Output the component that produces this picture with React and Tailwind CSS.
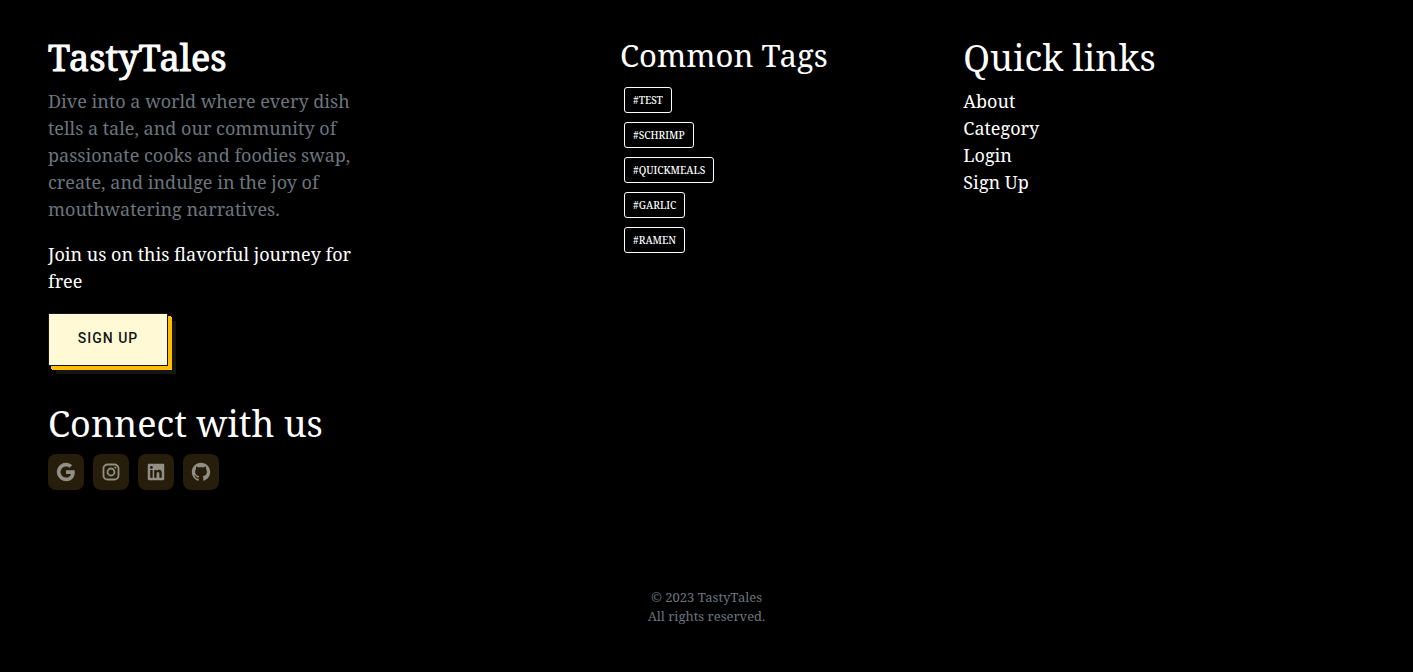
import { RiGoogleFill, RiLinkedinBoxFill, RiGithubFill } from "react-icons/ri";

function InstagramIcon() {
  return (
    <svg viewBox="0 0 24 24" width="1em" height="1em" fill="none" stroke="currentColor" strokeWidth="2">
      <rect x="3.8" y="3.8" width="16.4" height="16.4" rx="4.4" />
      <circle cx="12" cy="12" r="3.8" />
      <circle cx="16.8" cy="7.2" r="1.2" fill="currentColor" stroke="none" />
    </svg>
  );
}

const tags = ["#TEST", "#SCHRIMP", "#QUICKMEALS", "#GARLIC", "#RAMEN"];
const links = ["About", "Category", "Login", "Sign Up"];
const socials = [
  { label: "Google", Icon: RiGoogleFill },
  { label: "Instagram", Icon: InstagramIcon },
  { label: "LinkedIn", Icon: RiLinkedinBoxFill },
  { label: "GitHub", Icon: RiGithubFill },
];

export default function App() {
  return (
    <footer className="min-h-screen bg-black pt-9 text-white font-['Noto_Serif','Droid_Serif','DejaVu_Serif',serif]">
      <div className="grid grid-cols-[5fr_3fr_4fr] pl-9 pr-1">
        <section className="px-3">
          <h2 className="text-4xl leading-[43px] [-webkit-text-stroke:1px_white]">TastyTales</h2>
          <div className="mt-[9px] max-w-[310px] text-lg leading-[27px]">
            <p className="text-[#6c757d]">
              Dive into a world where every dish tells a tale, and our community of passionate cooks
              and foodies swap, create, and indulge in the joy of mouthwatering narratives.
            </p>
            <p className="mt-[18px]">Join us on this flavorful journey for free</p>
          </div>
          <button
            type="button"
            className="mt-[18px] block h-[53px] w-[120px] border border-[#151515] bg-[#fffad5] pb-1 font-['Roboto',sans-serif] text-sm font-medium tracking-[1px] text-[#151515] shadow-[3px_3px_0_0_#ffbf00,4px_4px_0_0_#ffbf00,8px_8px_0_0_#151515]"
          >
            SIGN UP
          </button>
          <h3 className="mt-9 text-4xl leading-[43px]">Connect with us</h3>
          <div className="mt-[9px] flex gap-[9px]">
            {socials.map(({ label, Icon }) => (
              <a
                key={label}
                href="#"
                aria-label={label}
                className="flex size-9 items-center justify-center rounded-lg bg-[#261d0a] text-[22px] text-[#928e85]"
              >
                <Icon />
              </a>
            ))}
          </div>
        </section>
        <section className="px-3">
          <h3 className="text-[31px] leading-[38px]">Common Tags</h3>
          <ul className="mt-[13px] flex flex-col items-start gap-[9px] pl-1">
            {tags.map((tag) => (
              <li key={tag}>
                <a
                  href="#"
                  className="block rounded-[3px] border border-white px-2 text-[10px] leading-6 font-medium"
                >
                  {tag}
                </a>
              </li>
            ))}
          </ul>
        </section>
        <nav className="px-3">
          <h3 className="text-4xl leading-[43px]">Quick links</h3>
          <ul className="mt-[9px] text-lg leading-[27px]">
            {links.map((link) => (
              <li key={link}>
                <a href="#">{link}</a>
              </li>
            ))}
          </ul>
        </nav>
      </div>
      <p className="mt-[98px] text-center text-[13px] leading-[19px] text-[#6c757d]">
        © 2023 TastyTales
        <br />
        All rights reserved.
      </p>
    </footer>
  );
}
